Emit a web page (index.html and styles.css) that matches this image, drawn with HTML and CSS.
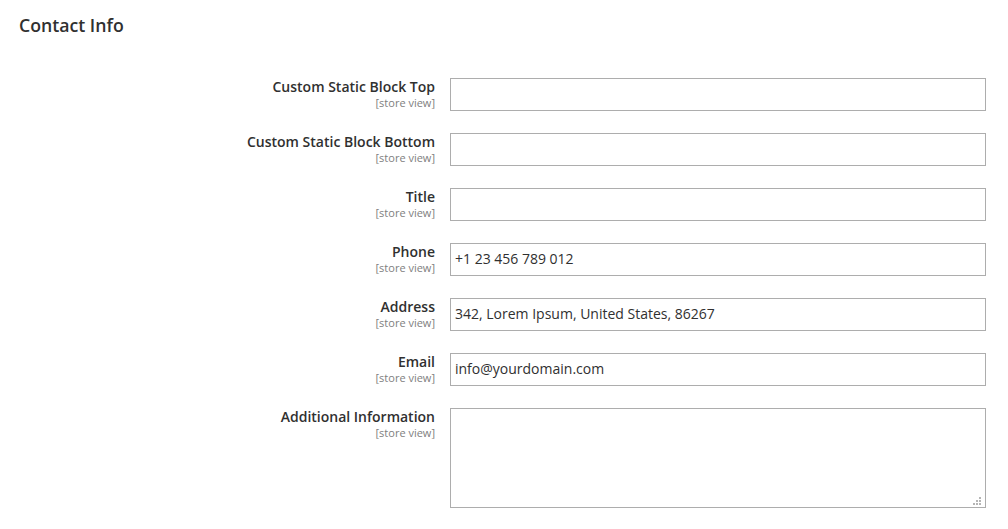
FILE: index.html
```html
<!DOCTYPE html>
<html lang="en">

<head>
    <meta charset="UTF-8">
    <meta name="viewport" content="width=device-width, initial-scale=1.0">
    <title>Contact Info</title>
    <link rel="stylesheet" href="styles.css">
</head>

<body>
    <div class="section">
        <h2 class="section-title">Contact Info</h2>

        <div class="fieldset">
            <div class="field">
                <label class="label" for="blockTop">
                    <span>Custom Static Block Top</span>
                    <span class="scope">[store view]</span>
                </label>
                <input type="text" id="blockTop" class="input-text">
            </div>
            <div class="field">
                <label class="label" for="blockBottom">
                    <span>Custom Static Block Bottom</span>
                    <span class="scope">[store view]</span>
                </label>
                <input type="text" id="blockBottom" class="input-text">
            </div>
            <div class="field">
                <label class="label" for="title">
                    <span>Title</span>
                    <span class="scope">[store view]</span>
                </label>
                <input type="text" id="title" class="input-text">
            </div>
            <div class="field">
                <label class="label" for="phone">
                    <span>Phone</span>
                    <span class="scope">[store view]</span>
                </label>
                <input type="text" id="phone" class="input-text" value="+1 23 456 789 012">
            </div>
            <div class="field">
                <label class="label" for="address">
                    <span>Address</span>
                    <span class="scope">[store view]</span>
                </label>
                <input type="text" id="address" class="input-text" value="342, Lorem Ipsum, United States, 86267">
            </div>
            <div class="field">
                <label class="label" for="email">
                    <span>Email</span>
                    <span class="scope">[store view]</span>
                </label>
                <input type="text" id="email" class="input-text" value="info@yourdomain.com">
            </div>
            <div class="field">
                <label class="label" for="info">
                    <span>Additional Information</span>
                    <span class="scope">[store view]</span>
                </label>
                <div class="textarea-wrap">
                    <textarea id="info" class="textarea"></textarea>
                    <svg class="grip" width="8" height="8" viewBox="0 0 8 8">
                        <rect x="6" y="0" width="2" height="2" />
                        <rect x="3" y="3" width="2" height="2" />
                        <rect x="6" y="3" width="2" height="2" />
                        <rect x="0" y="6" width="2" height="2" />
                        <rect x="3" y="6" width="2" height="2" />
                        <rect x="6" y="6" width="2" height="2" />
                    </svg>
                </div>
            </div>
        </div>
    </div>
</body>

</html>
```

FILE: styles.css
```css
body {
    margin: 0;
    font-family: "Open Sans", "Liberation Sans", sans-serif;
    color: #303030;
    background: #fff;
}

.section {
    padding: 14px 22px 0 19px;
}

.section-title {
    margin: 0 0 42px;
    font-size: 17.7px;
    font-weight: 600;
    line-height: 22px;
    color: #303030;
}

.fieldset {
    display: flex;
    flex-direction: column;
    gap: 22px;
}

.field {
    display: grid;
    grid-template-columns: 416px 536px;
    column-gap: 15px;
}

.label {
    display: flex;
    flex-direction: column;
    align-items: flex-end;
    text-align: right;
    font-size: 14px;
    font-weight: 600;
    line-height: 18px;
}

.scope {
    font-size: 11px;
    font-weight: 400;
    line-height: 13px;
    color: #808080;
}

.input-text,
.textarea {
    box-sizing: border-box;
    width: 100%;
    margin: 0;
    border: 1px solid #adadad;
    border-radius: 0;
    font-family: inherit;
    font-size: 14px;
    color: #303030;
    background: #fff;
    outline: none;
}

.input-text {
    height: 33px;
    padding: 0 4px 2px;
}

.textarea-wrap {
    position: relative;
    height: 100px;
}

.textarea {
    display: block;
    height: 100px;
    padding: 4px;
    resize: none;
}

/* resize grip in the corner of the textarea */
.grip {
    position: absolute;
    right: 5px;
    bottom: 3px;
    fill: #b5b5b5;
}
```
